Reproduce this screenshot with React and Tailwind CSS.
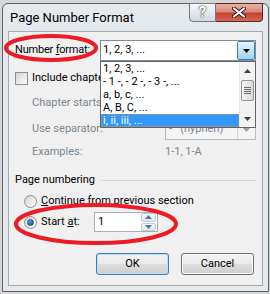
const DownArrow = ({ color = "#000" }) => (
  <svg width="7" height="4" viewBox="0 0 7 4">
    <path d="M0 0h7L3.5 4z" fill={color} />
  </svg>
);

const UpArrow = ({ color = "#000" }) => (
  <svg width="7" height="4" viewBox="0 0 7 4">
    <path d="M0 4h7L3.5 0z" fill={color} />
  </svg>
);

const formats = [
  "1, 2, 3, ...",
  "- 1 -, - 2 -, - 3 -, ...",
  "a, b, c, ...",
  "A, B, C, ...",
  "i, ii, iii, ...",
];

const Radio = ({ checked }) => (
  <div className="w-[13px] h-[13px] rounded-full border border-[#8e8f8f] bg-gradient-to-br from-[#d4d4d4] to-[#fbfbfb] flex items-center justify-center shrink-0">
    {checked && (
      <div className="w-[7px] h-[7px] rounded-full bg-gradient-to-br from-[#6fb8ee] to-[#0d4f8f] border border-[#1a4f7e]" />
    )}
  </div>
);

export default function App() {
  return (
    <div className="relative w-[270px] h-[294px] overflow-hidden bg-[#d6d6d6] pt-[3px] pl-[2px] font-['Segoe_UI',Roboto,sans-serif] text-[11px] text-black">
      {/* Window */}
      <div className="w-[267px] h-[289px] flex flex-col border border-[#5b6168] rounded-t-[6px] bg-[#e4e9ee]">
        {/* Title bar */}
        <div className="h-[27px] flex items-start justify-between shrink-0">
          <span className="ml-[7px] mt-[5px] text-[13px] leading-[17px]">
            Page Number Format
          </span>
          <div className="flex mr-[5px] -mt-px">
            <div className="w-[27px] h-[19px] border border-[#6f7883] rounded-bl-[4px] bg-gradient-to-b from-[#f6f8fa] to-[#d3d9e0] flex items-center justify-center">
              <span className="text-[15px] leading-[15px] font-bold text-white [text-shadow:0_0_1.5px_#222,0_0_1px_#222]">
                ?
              </span>
            </div>
            <div className="w-[47px] h-[19px] border border-l-0 border-[#5b2a27] rounded-br-[4px] bg-[linear-gradient(180deg,#eab0a4_0%,#d98a7c_45%,#c5412f_55%,#d46a52_100%)] flex items-center justify-center">
              <svg width="14" height="11" viewBox="0 0 14 11">
                <path d="M2 1.5l10 8M12 1.5l-10 8" stroke="#3b1a17" strokeWidth="4" strokeLinecap="round" />
                <path d="M2 1.5l10 8M12 1.5l-10 8" stroke="#fff" strokeWidth="2.2" strokeLinecap="round" />
              </svg>
            </div>
          </div>
        </div>

        {/* Client area */}
        <div className="flex-1 mx-[5px] mb-[5px] border border-[#a3aab2] bg-[#f0f0f0] px-[6px] flex flex-col">
          {/* Number format */}
          <div className="mt-[8px] h-[21px] flex items-center justify-between">
            <span className="tracking-[-0.2px]">
              Number <span className="underline">f</span>ormat:
            </span>
            <div className="relative w-[156px] h-[21px]">
              <div className="w-full h-full border border-[#7e8c9d] bg-white flex items-center">
                <span className="pl-[2px] flex-1">1, 2, 3, ...</span>
                <div className="w-[18px] h-[19px] border border-[#3c7fb1] rounded-[2px] bg-gradient-to-b from-[#e5f4fc] to-[#9fd2ef] flex items-center justify-center">
                  <DownArrow />
                </div>
              </div>
              {/* Open list */}
              <div className="absolute top-[21px] left-0 w-[156px] z-10 border border-[#646464] bg-white flex">
                <div className="flex-1 flex flex-col">
                  {formats.map((f, i) =>
                    i === formats.length - 1 ? (
                      <div
                        key={f}
                        className="h-[13px] leading-[11px] pl-px bg-[#3399ff] text-white border border-dotted border-[#d08a40]"
                      >
                        {f}
                      </div>
                    ) : (
                      <div key={f} className="h-[13px] leading-[13px] pl-[2px]">
                        {f}
                      </div>
                    )
                  )}
                </div>
                <div className="w-[16px] bg-[#f2f2f2] border-l border-[#e8e8e8] flex flex-col">
                  <div className="h-[17px] flex items-center justify-center">
                    <UpArrow color="#404040" />
                  </div>
                  <div className="mt-px mx-px h-[21px] border border-[#959595] rounded-[2px] bg-gradient-to-r from-[#f4f4f4] to-[#d9d9d9] flex flex-col items-center justify-center gap-px">
                    <div className="w-[7px] h-px bg-[#6b6b6b]" />
                    <div className="w-[7px] h-px bg-[#6b6b6b]" />
                    <div className="w-[7px] h-px bg-[#6b6b6b]" />
                    <div className="w-[7px] h-px bg-[#6b6b6b]" />
                  </div>
                  <div className="flex-1" />
                  <div className="h-[17px] flex items-center justify-center">
                    <DownArrow color="#404040" />
                  </div>
                </div>
              </div>
            </div>
          </div>

          {/* Include chapter number (cut by the open list) */}
          <div className="mt-[11px] h-[13px] flex items-center gap-[4px]">
            <div className="w-[13px] h-[13px] border border-[#8e8f8f] bg-gradient-to-br from-[#d6d6d6] to-[#fbfbfb] shrink-0" />
            <span className="w-[68px] overflow-hidden whitespace-nowrap">
              Include chapte
            </span>
          </div>

          {/* Chapter starts with style */}
          <div className="mt-[8px] h-[21px] flex items-center pl-[17px] text-[#7b8691]">
            <span className="w-[68px] overflow-hidden whitespace-nowrap">Chapter starts</span>
          </div>

          {/* Use separator */}
          <div className="mt-[5px] h-[21px] flex items-center justify-between pl-[17px] text-[#7b8691]">
            <span>Use separator:</span>
            <div className="w-[91px] h-[21px] border border-[#b9bcbf] bg-[#f4f4f4] flex items-center">
              <span className="flex-1 pl-[3px] whitespace-pre">-   (hyphen)</span>
              <div className="w-[18px] h-[19px] border-l border-[#d4d4d4] flex items-center justify-center">
                <DownArrow color="#a0a0a0" />
              </div>
            </div>
          </div>

          {/* Examples */}
          <div className="mt-[4px] h-[16px] flex items-center justify-between pl-[17px] text-[#7b8691]">
            <span>Examples:</span>
            <span className="w-[91px]">1-1, 1-A</span>
          </div>

          {/* Page numbering */}
          <div className="mt-[12px] h-[16px] flex items-center">
            <span className="whitespace-nowrap">Page numbering</span>
            <div className="flex-1 h-px bg-[#d5dadf] ml-[6px]" />
          </div>

          {/* Continue from previous section */}
          <div className="mt-[5px] h-[16px] flex items-center gap-[4px] pl-[9px]">
            <Radio />
            <span>
              <span className="underline">C</span>ontinue from previous section
            </span>
          </div>

          {/* Start at */}
          <div className="mt-[3px] h-[20px] flex items-center pl-[9px]">
            <Radio checked />
            <span className="ml-[4px] w-[53px]">
              Start <span className="underline">a</span>t:
            </span>
            <div className="w-[64px] h-[20px] border border-[#abadb3] bg-white flex items-center">
              <span className="flex-1 pl-[3px]">1</span>
              <div className="w-[15px] h-[18px] flex flex-col gap-px mr-px">
                <div className="flex-1 border border-[#c5cbd2] rounded-[2px] bg-gradient-to-b from-[#f7f9fb] to-[#e2e7ec] flex items-center justify-center">
                  <UpArrow color="#4a74a8" />
                </div>
                <div className="flex-1 border border-[#c5cbd2] rounded-[2px] bg-gradient-to-b from-[#f7f9fb] to-[#e2e7ec] flex items-center justify-center">
                  <DownArrow color="#4a74a8" />
                </div>
              </div>
            </div>
          </div>

          {/* Buttons */}
          <div className="mt-[21px] flex justify-end gap-[12px] pr-[2px]">
            <button className="w-[73px] h-[22px] rounded-[3px] border border-[#3c7fb1] bg-[linear-gradient(180deg,#f2f2f2_0%,#ebebeb_50%,#dddddd_50%,#cfcfcf_100%)] shadow-[inset_0_0_0_1px_#b7e0f7]">
              OK
            </button>
            <button className="w-[73px] h-[22px] rounded-[3px] border border-[#707070] bg-[linear-gradient(180deg,#f2f2f2_0%,#ebebeb_50%,#dddddd_50%,#cfcfcf_100%)] shadow-[inset_0_0_0_1px_#fcfcfc]">
              Cancel
            </button>
          </div>
        </div>
      </div>

      {/* Red annotation ellipses */}
      <svg
        className="absolute left-0 top-0 pointer-events-none z-20"
        width="270"
        height="294"
        viewBox="0 0 270 294"
      >
        <ellipse cx="51" cy="48" rx="45" ry="12" fill="none" stroke="#ec1c24" strokeWidth="4" />
        <ellipse cx="96" cy="224" rx="80" ry="19" fill="none" stroke="#ec1c24" strokeWidth="4" />
      </svg>
    </div>
  );
}
